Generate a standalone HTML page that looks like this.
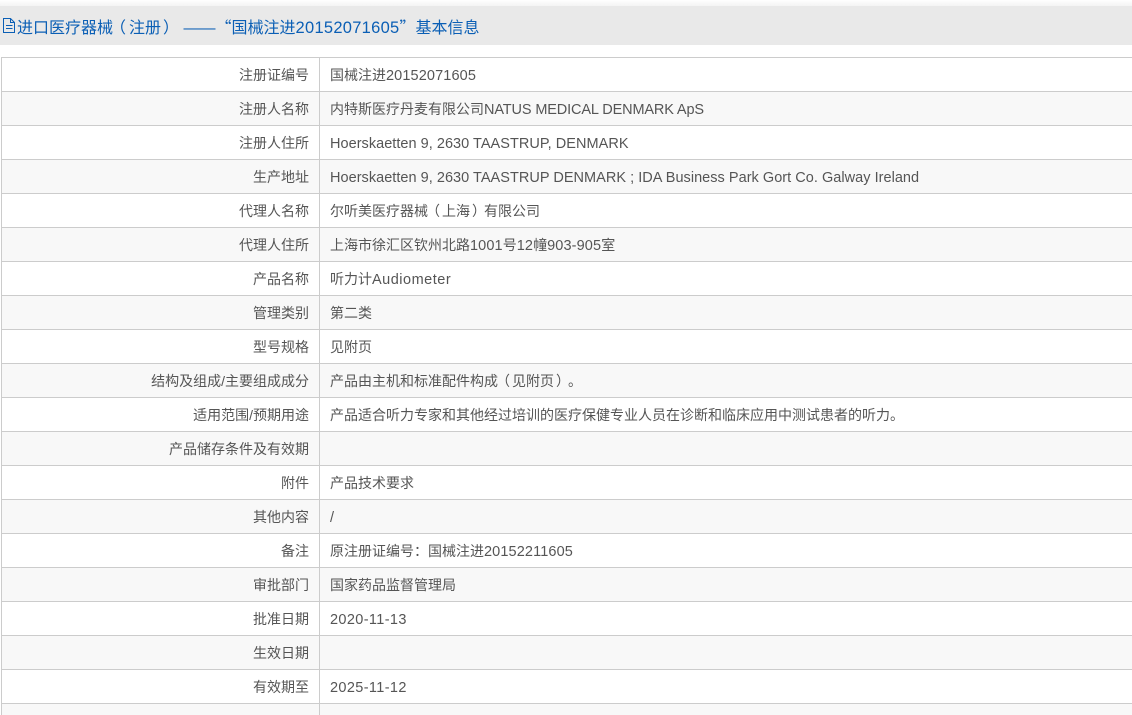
<!DOCTYPE html>
<html lang="zh-CN"><head><meta charset="utf-8">
<style>
html,body{margin:0;padding:0;background:#fff;width:1132px;height:715px;overflow:hidden}
body{font-family:"Liberation Sans","Noto Sans CJK SC",sans-serif;font-size:14px;color:#555;position:relative}
.top{position:absolute;left:0;top:0;width:1132px;height:6px;background:linear-gradient(#fff,#f4f4f4)}
.hd{position:absolute;left:0;top:6px;width:1132px;height:39px;overflow:hidden;background:#e9e9e9;color:#0b5fb5;font-size:16px;line-height:41px;white-space:nowrap}
.hd svg{position:absolute;left:2px;top:12px}
.hd span.t{position:absolute;left:17px;top:0}
.hd .n{font-size:16.5px;letter-spacing:.27px}
.q{font-family:"Noto Sans CJK SC",sans-serif}
.o,.c{position:relative;display:inline-block;line-height:1}
.o{left:-3px}.c{left:2px}
.v .o{left:-2px}
.l{font-size:14.5px;letter-spacing:.12px}
.a{font-size:14.5px;letter-spacing:.03px}
.m{font-size:14.5px;letter-spacing:-.13px}
.w{font-size:14.5px;letter-spacing:.5px}
.d{font-size:14.5px;letter-spacing:.37px}
.tb{position:absolute;left:1px;top:57px;width:1131px;border-top:1px solid #ccc;border-left:1px solid #ccc}
.r{height:33px;border-bottom:1px solid #ccc;overflow:hidden;position:relative;background:#fff}
.r:nth-child(even){background:#f8f8f8}
.k,.v{position:absolute;top:0;height:33px;line-height:35px;white-space:nowrap;overflow:hidden}
.k{left:0;width:307px;padding-right:10px;text-align:right;border-right:1px solid #ccc}
.v{left:318px;padding-left:10px;right:0}
</style></head><body>
<div class="top"></div>
<div class="hd"><svg width="14" height="16" viewBox="0 0 14 16" fill="none" stroke="#0b5fb5" stroke-width="1"><path d="M1.5 .5H8.5L12.5 4.5V14.5H1.5Z"/><path d="M8.5 .5V4.5H12.5M4 7.5H10.5M4 10.5H10.5"/></svg><span class="t">进口医疗器械<span class="o">（</span>注册<span class="c">）</span> <span style="margin-left:2px">——</span><span class="q">“</span>国械注进<span class="n">20152071605</span><span class="q">”</span>基本信息</span></div>
<div class="tb">
<div class="r"><div class="k">注册证编号</div><div class="v">国械注进<span class="l">20152071605</span></div></div>
<div class="r"><div class="k">注册人名称</div><div class="v">内特斯医疗丹麦有限公司<span class="m">NATUS MEDICAL DENMARK ApS</span></div></div>
<div class="r"><div class="k">注册人住所</div><div class="v"><span class="a">Hoerskaetten 9, 2630 TAASTRUP, DENMARK</span></div></div>
<div class="r"><div class="k">生产地址</div><div class="v"><span class="a">Hoerskaetten 9, 2630 TAASTRUP DENMARK ; IDA Business Park Gort Co. Galway Ireland</span></div></div>
<div class="r"><div class="k">代理人名称</div><div class="v">尔听美医疗器械<span class="o">（</span>上海<span class="c">）</span>有限公司</div></div>
<div class="r"><div class="k">代理人住所</div><div class="v">上海市徐汇区钦州北路<span class="l">1001</span>号<span class="l">12</span>幢<span class="l">903-905</span>室</div></div>
<div class="r"><div class="k">产品名称</div><div class="v">听力计<span class="w">Audiometer</span></div></div>
<div class="r"><div class="k">管理类别</div><div class="v">第二类</div></div>
<div class="r"><div class="k">型号规格</div><div class="v">见附页</div></div>
<div class="r"><div class="k">结构及组成/主要组成成分</div><div class="v">产品由主机和标准配件构成<span class="o">（</span>见附页<span class="c">）</span>。</div></div>
<div class="r"><div class="k">适用范围/预期用途</div><div class="v">产品适合听力专家和其他经过培训的医疗保健专业人员在诊断和临床应用中测试患者的听力。</div></div>
<div class="r"><div class="k">产品储存条件及有效期</div><div class="v"></div></div>
<div class="r"><div class="k">附件</div><div class="v">产品技术要求</div></div>
<div class="r"><div class="k">其他内容</div><div class="v"><span class="a">/</span></div></div>
<div class="r"><div class="k">备注</div><div class="v">原注册证编号：国械注进<span class="l">20152211605</span></div></div>
<div class="r"><div class="k">审批部门</div><div class="v">国家药品监督管理局</div></div>
<div class="r"><div class="k">批准日期</div><div class="v"><span class="d">2020-11-13</span></div></div>
<div class="r"><div class="k">生效日期</div><div class="v"></div></div>
<div class="r"><div class="k">有效期至</div><div class="v"><span class="d">2025-11-12</span></div></div>
<div class="r"><div class="k"></div><div class="v"></div></div>
</div>
</body></html>
